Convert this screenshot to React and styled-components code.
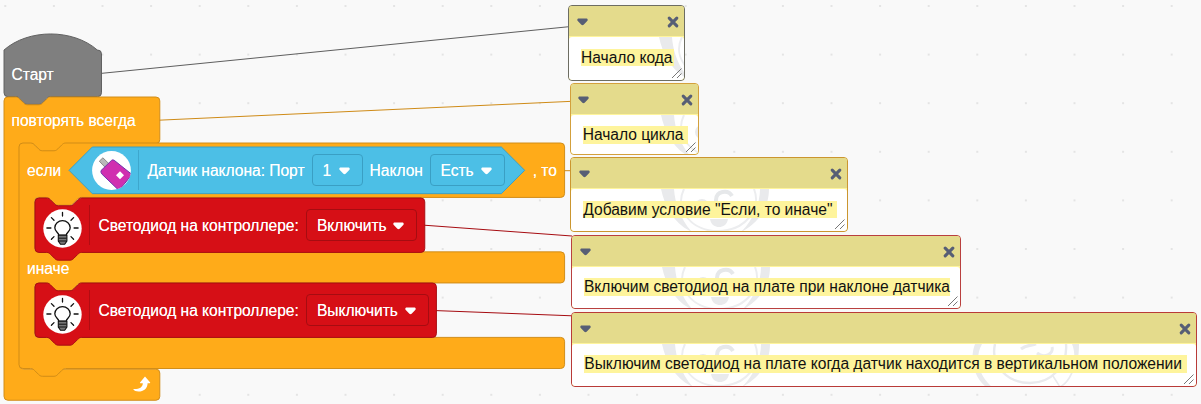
import React from 'react';
import styled, { createGlobalStyle } from 'styled-components';

const GlobalStyle = createGlobalStyle`
  body { margin: 0; background: #f9f9f9; }
  * { box-sizing: border-box; }
`;

/* Block geometry is defined in workspace units and scaled by the zoom level. */
const ZOOM = 0.972;
const px = (u) => `${u * ZOOM}px`;

const COLORS = {
  gray: { fill: '#7f7f7f', stroke: '#5f5f5f' },
  orange: { fill: '#ffab19', stroke: '#cf8b17' },
  blue: { fill: '#4cbfe6', stroke: '#3a9fc4' },
  red: { fill: '#d60f16', stroke: '#a60c11' },
};

const Canvas = styled.main`
  position: relative;
  width: 1201px;
  height: 404px;
  overflow: hidden;
  background: #f9f9f9;
  font-family: 'Liberation Sans', Arial, sans-serif;
`;

const Layer = styled.svg`
  position: absolute;
  inset: 0;
  width: 100%;
  height: 100%;
`;

const Program = styled.section`
  position: absolute;
  left: 3.5px;
  top: 50px;
  display: flex;
  flex-direction: column;
  align-items: flex-start;
  color: #fff;
  font-size: 15.6px;
  letter-spacing: -0.03px;
  line-height: 18px;
  white-space: nowrap;
`;

const BlockBox = styled.div`
  position: relative;
  width: ${(p) => px(p.$w)};
  height: ${(p) => px(p.$h)};
`;

const Shape = styled.svg`
  position: absolute;
  left: 0;
  top: 0;
  width: 100%;
  height: 100%;
  overflow: visible;
`;

const Row = styled.div`
  position: relative;
  display: flex;
  align-items: center;
  height: ${(p) => px(p.$h)};
  padding-left: ${(p) => p.$pad ?? 8}px;
`;

const Mouth = styled.div`
  position: relative;
  margin-left: ${px(16)};
  height: ${(p) => px(p.$h)};
`;

const Label = styled.span`
  flex: none;
  width: ${(p) => (p.$w ? `${p.$w}px` : 'auto')};
  margin-left: ${(p) => p.$ml ?? 0}px;
  margin-top: ${(p) => p.$mt ?? 2}px;
  text-shadow: 0 0 0.6px rgba(255, 255, 255, 0.8);
`;

const IconSlot = styled.span`
  flex: none;
  display: block;
  width: 39px;
  height: 39px;
  margin-top: ${(p) => p.$mt ?? 0}px;
  svg { display: block; }
`;

const Divider = styled.i`
  flex: none;
  width: 1px;
  height: 40px;
  margin: 0 8.5px 0 ${(p) => p.$ml ?? 8}px;
  background: ${(p) => COLORS[p.$c].stroke};
  opacity: 0.75;
`;

const Select = styled.span`
  flex: none;
  display: flex;
  align-items: center;
  justify-content: space-between;
  width: ${(p) => p.$w}px;
  height: 32px;
  margin-left: ${(p) => p.$ml ?? 8}px;
  padding: 2px 12px 0 9.5px;
  border: 1px solid ${(p) => COLORS[p.$c].stroke};
  border-radius: 4px;
  text-shadow: 0 0 0.6px rgba(255, 255, 255, 0.8);
`;

const Condition = styled.div`
  position: relative;
  display: flex;
  align-items: center;
  flex: none;
  width: ${px(468.8)};
  height: ${px(48)};
  padding-left: 23px;
`;

const Note = styled.article`
  position: absolute;
  left: ${(p) => p.$x}px;
  top: ${(p) => p.$y}px;
  width: ${(p) => p.$w}px;
  height: ${(p) => p.$h}px;
  display: flex;
  flex-direction: column;
  overflow: hidden;
  border: 1.5px solid ${(p) => p.$line};
  border-radius: 4px;
  background: #fef49c;
`;

const NoteBar = styled.header`
  flex: none;
  display: flex;
  align-items: center;
  justify-content: space-between;
  height: 30px;
  padding: 2px 5px 0 7.5px;
  background: #e4db8c;
`;

const NoteBody = styled.div`
  position: relative;
  flex: 1;
  margin: 1px 0 0;
  padding: 11.5px 0 0 12px;
  border-radius: 3px;
  overflow: hidden;
  background: #fff;
`;

const NoteText = styled.span`
  position: relative;
  display: inline-block;
  width: ${(p) => p.$w}px;
  height: 17.5px;
  line-height: 18px;
  font-size: 15.6px;
  letter-spacing: -0.03px;
  white-space: nowrap;
  color: #111;
  background: #fef49c;
`;

const Watermark = styled.svg`
  position: absolute;
  left: 0;
  top: 0;
`;

const Grip = styled.svg`
  position: absolute;
  right: 1px;
  bottom: 1px;
`;

const NOTCH = 'c 2,0 3,1 4,2 l 4,4 c 1,1 2,2 4,2 h 12 c 2,0 3,-1 4,-2 l 4,-4 c 1,-1 2,-2 4,-2';
const TAB = 'c -2,0 -3,1 -4,2 l -4,4 c -1,1 -2,2 -4,2 h -12 c -2,0 -3,-1 -4,-2 l -4,-4 c -1,-1 -2,-2 -4,-2';
const corner = (d) => `a 4,4 0 0,1 ${d}`;

const statementPath = (w, h) =>
  `M 0,4 A 4,4 0 0,1 4,0 H 12 ${NOTCH} H ${w - 4} ${corner('4,4')} V ${h - 4} ${corner('-4,4')} H 48 ${TAB} H 4 ${corner('-4,-4')} Z`;

const hatPath = (w, h) =>
  `M 0,0 c 25,-22 71,-22 96,0 H ${w - 4} ${corner('4,4')} V ${h - 4} ${corner('-4,4')} H 48 ${TAB} H 4 ${corner('-4,-4')} Z`;

const mouthPath = (y, depth) =>
  `H 64 ${TAB} H 20 a 4,4 0 0,0 -4,4 V ${y + depth - 4} a 4,4 0 0,0 4,4`;

const foreverPath = (w, h) =>
  `M 0,4 A 4,4 0 0,1 4,0 H 12 ${NOTCH} H ${w - 4} ${corner('4,4')} V 44 ${corner('-4,4')} ${mouthPath(48, 232)} H ${w - 4} ${corner('4,4')} V ${h - 4} ${corner('-4,4')} H 4 ${corner('-4,-4')} Z`;

const ifElsePath = (w) =>
  `M 0,4 A 4,4 0 0,1 4,0 H 12 ${NOTCH} H ${w - 4} ${corner('4,4')} V 52 ${corner('-4,4')} ${mouthPath(56, 56)} H ${w - 4} ${corner('4,4')} V 140 ${corner('-4,4')} ${mouthPath(144, 56)} H ${w - 4} ${corner('4,4')} V 228 ${corner('-4,4')} H 48 ${TAB} H 4 ${corner('-4,-4')} Z`;

const booleanPath = (w, h) =>
  `M ${h / 2},0 H ${w - h / 2} l ${h / 2},${h / 2} l -${h / 2},${h / 2} H ${h / 2} l -${h / 2},-${h / 2} Z`;

function BlockShape({ w, h, d, color }) {
  const c = COLORS[color];
  return (
    <Shape viewBox={`0 0 ${w} ${h}`} preserveAspectRatio="none">
      <path d={d} fill={c.fill} stroke={c.stroke} strokeWidth="1" />
    </Shape>
  );
}

function Caret({ fill = '#fff' }) {
  return (
    <svg width="11" height="8" viewBox="0 0 11 8">
      <path
        fill={fill}
        d="M1.2 0.6 H9.8 Q10.8 0.8 10.7 1.9 Q10.6 2.6 10 3.2 L6.6 6.7 Q5.5 7.6 4.4 6.7 L1 3.2 Q0.4 2.6 0.3 1.9 Q0.2 0.8 1.2 0.6 Z"
      />
    </svg>
  );
}

function BulbIcon() {
  return (
    <svg width="39" height="39" viewBox="0 0 39 39">
      <circle cx="19.5" cy="19.5" r="19.2" fill="#fff" />
      <g fill="none" stroke="#111" strokeWidth="1.3" strokeLinecap="round">
        <path d="M15.8 26.2 C15.8 23.5 11.8 22.6 11.8 18.8 A7.7 7.2 0 0 1 27.2 18.8 C27.2 22.6 23.2 23.5 23.2 26.2 Z" />
        <path d="M19.5 3.4v3.7M3.9 19h4M31.1 19h4M8.4 8.6l2.6 2.7M30.6 8.6l-2.6 2.7M8.4 30.2l2.6-2.6M30.6 30.2l-2.6-2.6" />
      </g>
      <path d="M15.3 26.3h8.6v5.8l-2.2 3.2h-4.2l-2.2-3.2z" fill="#777" stroke="#111" strokeWidth="1.1" />
      <path d="M15.6 29.2h8M15.8 32h7.6" stroke="#111" strokeWidth="1" />
    </svg>
  );
}

function SensorIcon() {
  return (
    <svg width="39" height="39" viewBox="0 0 39 39">
      <defs>
        <clipPath id="sensor-clip"><circle cx="19.5" cy="19.5" r="19.4" /></clipPath>
      </defs>
      <circle cx="19.5" cy="19.5" r="19.4" fill="#fff" />
      <g clipPath="url(#sensor-clip)">
        <path d="M7.3 10.2 L10.9 6.8 L17 12.8 L13.4 16.6 Z" fill="#b9b9b9" stroke="#777" strokeWidth="0.8" />
        <path d="M9 19.6 L19.5 9.4 Q20.7 8.4 22.2 9.3 L40 23.5 L27 39.5 L10.1 23.3 Q8.5 21.4 9 19.6 Z" fill="#d02fb0" stroke="#6f35ad" strokeWidth="1" />
        <path d="M28 20.3 L32 24.3 L28 28.3 L24 24.3 Z" fill="#fff" />
      </g>
    </svg>
  );
}

function LoopArrow() {
  return (
    <svg width="18" height="17" viewBox="0 0 18 17">
      <path
        d="M12 0.6 L17.2 6.6 Q17.3 7.2 16.6 7.2 H14.6 C14.6 12.4 10.5 15.6 5.5 15.6 C3.2 15.6 1.2 14.8 0.3 13.6 Q0.2 13 0.9 13 C6 13.2 9.8 11.4 9.8 7.2 H7.4 Q6.7 7.1 7 6.4 Z"
        fill="#fff"
      />
    </svg>
  );
}

function LedBlock({ w, value, selectWidth }) {
  return (
    <BlockBox $w={w} $h={56}>
      <BlockShape w={w} h={56} color="red" d={statementPath(w, 56)} />
      <Row $h={56} $pad={8}>
        <IconSlot $mt={8}><BulbIcon /></IconSlot>
        <Divider $c="red" $ml={7.4} />
        <Label $w={200}>Светодиод на контроллере:</Label>
        <Select $c="red" $w={selectWidth}>
          {value}
          <Caret />
        </Select>
      </Row>
    </BlockBox>
  );
}

function IfElseBlock() {
  return (
    <BlockBox $w={561.3} $h={232}>
      <BlockShape w={561.3} h={232} color="orange" d={ifElsePath(561.3)} />
      <Row $h={56}>
        <Label $w={42}>если</Label>
        <Condition>
          <BlockShape w={468.8} h={48} color="blue" d={booleanPath(468.8, 48)} />
          <Row $h={48} $pad={0}>
            <IconSlot><SensorIcon /></IconSlot>
            <Divider $c="blue" $ml={7} />
            <Label $w={156.5}>Датчик наклона: Порт</Label>
            <Select $c="blue" $w={50.5}>1<Caret /></Select>
            <Label $w={52.5} $ml={7}>Наклон</Label>
            <Select $c="blue" $w={75}>Есть<Caret /></Select>
          </Row>
        </Condition>
        <Label $ml={8}>, то</Label>
      </Row>
      <Mouth $h={56}>
        <LedBlock w={401} value="Включить" selectWidth={111} />
      </Mouth>
      <Row $h={32}>
        <Label $mt={3}>иначе</Label>
      </Row>
      <Mouth $h={56}>
        <LedBlock w={413} value="Выключить" selectWidth={122.5} />
      </Mouth>
    </BlockBox>
  );
}

function LogoMarks() {
  return (
    <Watermark width="640" height="44" viewBox="0 0 640 44" fill="none">
      <g fill="#e9eaec">
        <path d="M90 0 H103 C104 15 110 31 121 43 C103 35 94 18 90 0 Z" />
        <path d="M198 0 C198 18 188 34 170 43 C182 31 189 15 189 0 Z" />
        <circle cx="131" cy="17" r="7" />
        <path d="M139 30 H157 C156 36 152 38 148 38 S140 36 139 30 Z" />
      </g>
      <path d="M113 0 C103 20 120 42 147 42 S191 20 183 0" stroke="#ecedef" strokeWidth="2" />
      <path d="M161 7 C157 0 145 2 145 11 C145 20 157 22 162 15" stroke="#e6e8ea" strokeWidth="4" />
      <g stroke="#e9eaed">
        <path d="M423 0 C418 22 436 39 458 39 C479 39 496 22 494 0" strokeWidth="2.4" />
        <path d="M449 5 C455 0 460 2 464 0 M465 9 C472 15 482 10 480 3" strokeWidth="3" />
        <path d="M481 32 L488 43 C499 37 503 22 503 15" strokeWidth="1.6" />
      </g>
      <path d="M410 0 C403 12 405 30 420 43 H414 C400 31 398 13 403 0 Z M500 0 H507 C507 13 505 22 501 28 C503 16 503 7 500 0 Z" fill="#e9eaec" />
    </Watermark>
  );
}

const NOTES = [
  { x: 568, y: 5, w: 117, h: 75.5, line: '#6d6d62', text: 'Начало кода', tw: 93 },
  { x: 569.7, y: 82.7, w: 129, h: 72.5, line: '#d3a03c', text: 'Начало цикла', tw: 105 },
  { x: 570.3, y: 157.2, w: 277.3, h: 75.3, line: '#cb962f', text: 'Добавим условие "Если, то иначе"', tw: 254 },
  { x: 571, y: 234.6, w: 390.3, h: 74.6, line: '#b9403f', text: 'Включим светодиод на плате при наклоне датчика', tw: 366 },
  { x: 571.3, y: 311.8, w: 626, h: 75, line: '#b93b38', text: 'Выключим светодиод на плате когда датчик находится в вертикальном положении', tw: 603 },
];

function CommentNote({ x, y, w, h, line, text, tw }) {
  return (
    <Note $x={x} $y={y} $w={w} $h={h} $line={line}>
      <NoteBar>
        <Caret fill="#575e75" />
        <svg width="12" height="12" viewBox="0 0 12 12">
          <path d="M2.2 2.2 L9.8 9.8 M9.8 2.2 L2.2 9.8" stroke="#575e75" strokeWidth="3.1" strokeLinecap="round" />
        </svg>
      </NoteBar>
      <NoteBody>
        <LogoMarks />
        <NoteText $w={tw}>{text}</NoteText>
        <Grip width="12" height="12" viewBox="0 0 12 12">
          <path d="M1 11 L10.5 1.5 M6 11 L10.5 6.5" stroke="#777" strokeWidth="1" />
        </Grip>
      </NoteBody>
    </Note>
  );
}

export default function App() {
  return (
    <>
      <GlobalStyle />
      <Canvas>
        <Layer viewBox="0 0 1201 404">
          <defs>
            <pattern id="grid" x="4.3" y="5" width="48.6" height="48.6" patternUnits="userSpaceOnUse">
              <rect width="2" height="2" fill="#e4e4e4" />
            </pattern>
          </defs>
          <rect width="1201" height="404" fill="url(#grid)" />
          <g strokeWidth="1">
            <path d="M101 73.4 L568 26.8" stroke="#5f5f5f" />
            <path d="M159 120.2 L570 101.4" stroke="#cf8b17" />
            <path d="M564 170.7 H571" stroke="#cf8b17" />
            <path d="M424 225.2 L572 236" stroke="#a60c11" />
            <path d="M436 310.6 L572 315.8" stroke="#a60c11" />
          </g>
        </Layer>
        <Program>
          <BlockBox $w={100.3} $h={48}>
            <BlockShape w={100.3} h={48} color="gray" d={hatPath(100.3, 48)} />
            <Row $h={48}><Label $mt={3}>Старт</Label></Row>
          </BlockBox>
          <BlockBox $w={160.3} $h={312}>
            <BlockShape w={160.3} h={312} color="orange" d={foreverPath(160.3, 312)} />
            <Row $h={48}><Label>повторять всегда</Label></Row>
            <Mouth $h={232}><IfElseBlock /></Mouth>
            <Row $h={32} $pad={129}><LoopArrow /></Row>
          </BlockBox>
        </Program>
        {NOTES.map((n) => <CommentNote key={n.text} {...n} />)}
      </Canvas>
    </>
  );
}
